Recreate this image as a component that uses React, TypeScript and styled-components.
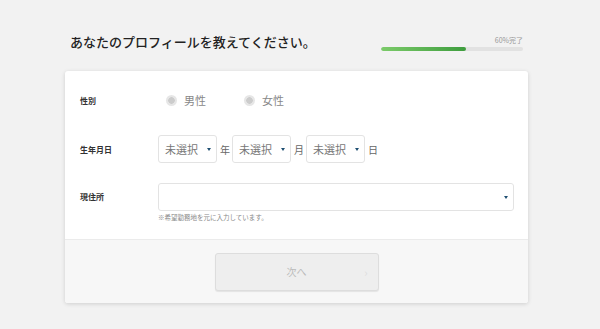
import React from 'react';
import styled, { createGlobalStyle } from 'styled-components';

const GlobalStyle = createGlobalStyle`
  html, body {
    margin: 0;
    padding: 0;
    background: #f2f2f2;
  }
  body {
    font-family: "Noto Sans CJK JP", "Noto Sans", sans-serif;
    color: #333333;
  }
`;

const Page = styled.div`
  width: 600px;
  height: 329px;
  padding: 0 72px 0 65px;
  box-sizing: border-box;
`;

const Header = styled.div`
  display: flex;
  align-items: flex-end;
  justify-content: space-between;
  height: 71px;
  padding: 0 5px 20px 5px;
  box-sizing: border-box;
`;

const Title = styled.h1`
  margin: 0;
  font-size: 13px;
  font-weight: 500;
  color: #222222;
  line-height: 18px;
`;

const Progress = styled.div`
  width: 142px;
  display: flex;
  flex-direction: column;
  align-items: flex-end;
  gap: 2px;
`;

const ProgressLabel = styled.span`
  font-size: 7px;
  color: #999999;
  line-height: 9px;
`;

const Track = styled.div`
  width: 100%;
  height: 4px;
  border-radius: 2px;
  background: #e2e2e2;
  overflow: hidden;
`;

const Fill = styled.div`
  height: 100%;
  border-radius: 2px;
  background: linear-gradient(to right, #7ccb6a, #3e9d3e);
`;

const Card = styled.div`
  width: 463px;
  background: #ffffff;
  border-radius: 3px;
  box-shadow: 0 1px 4px rgba(0, 0, 0, 0.15);
  overflow: hidden;
`;

const Body = styled.div`
  padding: 14px 14px 14px 15px;
  display: flex;
  flex-direction: column;
`;

const Row = styled.div<{ $h: number }>`
  display: flex;
  align-items: flex-start;
  min-height: ${({ $h }) => $h}px;
`;

const Label = styled.div<{ $top: number }>`
  width: 78px;
  flex-shrink: 0;
  font-size: 8px;
  font-weight: 700;
  color: #333333;
  padding-top: ${({ $top }) => $top}px;
`;

const Field = styled.div`
  flex: 1;
  display: flex;
  flex-direction: column;
`;

const Inline = styled.div<{ $top?: number }>`
  display: flex;
  align-items: center;
  padding-top: ${({ $top = 0 }) => $top}px;
`;

const RadioItem = styled.label`
  display: flex;
  align-items: center;
  gap: 7px;
  font-size: 11px;
  color: #888888;
  margin-left: 8px;
  width: 70px;
`;

const RadioDot = styled.span`
  width: 11px;
  height: 11px;
  border-radius: 50%;
  background: radial-gradient(circle, #cccccc 0 3px, #e6e6e6 3.5px);
`;

const Select = styled.div<{ $w: number }>`
  width: ${({ $w }) => $w}px;
  height: 28px;
  box-sizing: border-box;
  border: 1px solid #e3e3e3;
  border-radius: 3px;
  background: #ffffff;
  display: flex;
  align-items: center;
  justify-content: space-between;
  padding: 0 5px 0 6px;
  font-size: 11px;
  color: #777777;
`;

const Caret = styled.span`
  width: 0;
  height: 0;
  border-left: 2px solid transparent;
  border-right: 2px solid transparent;
  border-top: 3px solid #1f4f72;
`;

const Unit = styled.span`
  font-size: 10px;
  color: #666666;
  margin: 0 2px 0 3px;
`;

const Note = styled.div`
  font-size: 6.5px;
  color: #888888;
  margin-top: 1px;
`;

const Footer = styled.div`
  background: #f7f7f7;
  border-top: 1px solid #ebebeb;
  height: 63px;
  display: flex;
  align-items: center;
  justify-content: center;
`;

const NextButton = styled.button`
  width: 164px;
  height: 38px;
  border: 1px solid #dddddd;
  border-radius: 3px;
  background: #eeeeee;
  box-shadow: 0 1px 1px rgba(0, 0, 0, 0.08);
  position: relative;
  font-family: inherit;
  font-size: 10px;
  color: #bbbbbb;
`;

const Chevron = styled.span`
  position: absolute;
  right: 10px;
  top: 50%;
  transform: translateY(-50%);
  font-size: 11px;
  color: #dddddd;
`;

const DateSelect = ({ unit }: { unit: string }) => (
  <>
    <Select $w={59}>
      未選択
      <Caret />
    </Select>
    <Unit>{unit}</Unit>
  </>
);

export default function App() {
  const progress = 60;
  return (
    <Page>
      <GlobalStyle />
      <Header>
        <Title>あなたのプロフィールを教えてください。</Title>
        <Progress>
          <ProgressLabel>{progress}%完了</ProgressLabel>
          <Track>
            <Fill style={{ width: `${progress}%` }} />
          </Track>
        </Progress>
      </Header>
      <Card>
        <Body>
          <Row $h={50}>
            <Label $top={10}>性別</Label>
            <Inline $top={7}>
              <RadioItem>
                <RadioDot />
                男性
              </RadioItem>
              <RadioItem>
                <RadioDot />
                女性
              </RadioItem>
            </Inline>
          </Row>
          <Row $h={48}>
            <Label $top={9}>生年月日</Label>
            <Inline>
              <DateSelect unit="年" />
              <DateSelect unit="月" />
              <DateSelect unit="日" />
            </Inline>
          </Row>
          <Row $h={42}>
            <Label $top={8}>現住所</Label>
            <Field>
              <Select $w={356}>
                <span />
                <Caret />
              </Select>
              <Note>※希望勤務地を元に入力しています。</Note>
            </Field>
          </Row>
        </Body>
        <Footer>
          <NextButton type="button">
            次へ
            <Chevron>›</Chevron>
          </NextButton>
        </Footer>
      </Card>
    </Page>
  );
}
